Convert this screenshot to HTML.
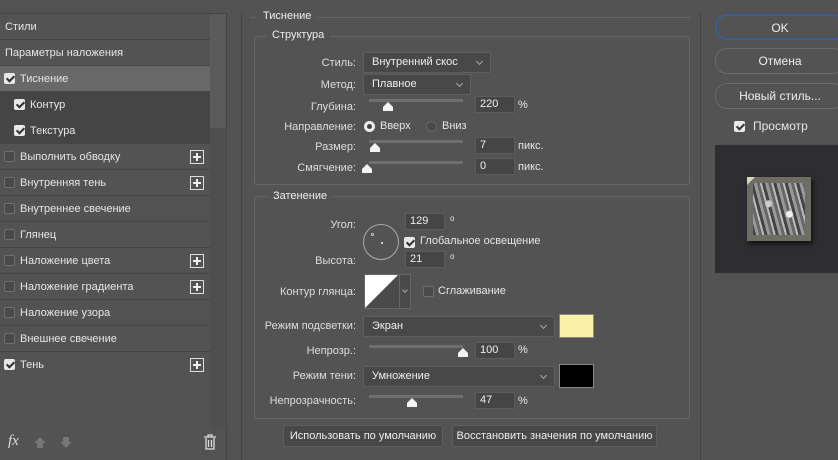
<!DOCTYPE html>
<html><head><meta charset="utf-8"><style>
*{box-sizing:border-box;margin:0;padding:0}
body{width:838px;height:460px;background:#535353;font-family:"Liberation Sans",sans-serif;font-size:11px;color:#e6e6e6;position:relative;overflow:hidden}
.a{position:absolute}
.row{position:absolute;left:0;width:210px;height:26px;line-height:26px;border-bottom:1px solid #444;padding-left:20px;white-space:nowrap}
.cb{position:absolute;width:11px;height:11px;border-radius:2px;border:1px solid #6e6e6e;background:#4a4a4a}
.cb.on{background:#e8e8e8;border-color:#e8e8e8}
.cb.on:after{content:"";position:absolute;left:3px;top:0px;width:3px;height:6px;border:solid #333;border-width:0 2px 2px 0;transform:rotate(45deg)}
.plus{position:absolute;left:190px;top:6px;width:14px;height:14px;border:1px solid #ddd}
.plus:before{content:"";position:absolute;left:2px;top:5px;width:8px;height:2px;background:#eee}
.plus:after{content:"";position:absolute;left:5px;top:2px;width:2px;height:8px;background:#eee}
.lbl{position:absolute;text-align:right;width:200px;color:#ddd}
.sel{position:absolute;height:21px;background:#484848;border:1px solid #5f5f5f;border-radius:2px;padding-left:8px;line-height:19px;color:#eee}
.sel:after{content:"";position:absolute;right:8px;top:6px;width:4px;height:4px;border:solid #aaa;border-width:0 1px 1px 0;transform:rotate(45deg)}
.inp{position:absolute;height:17px;width:40px;background:#454545;border:1px solid #5c5c5c;padding-left:4px;line-height:15px;color:#eee}
.tr{position:absolute;height:3px;width:94px;background:#6e6e6e}
.th{position:absolute;width:0;height:0;border-left:5px solid transparent;border-right:5px solid transparent;border-bottom:5px solid #f4f4f4}
.th:after{content:"";position:absolute;left:-5px;top:5px;width:10px;height:4px;background:#f4f4f4}
.box{position:absolute;border:1px solid #666;border-radius:2px}
.leg{position:absolute;background:#535353;padding:0 6px;color:#eee}
.btn{position:absolute;border:1px solid #6a6a6a;border-radius:12px;text-align:center;color:#eee;font-size:12px}
.fb{position:absolute;height:22px;background:#484848;border:1px solid #5f5f5f;border-radius:2px;text-align:center;line-height:20px;color:#eee}
</style></head><body>
<div class="a" style="left:0;top:13px;width:227px;height:447px;border-right:1px solid #444;border-top:1px solid #444"></div>
<div class="a" style="left:210px;top:14px;width:16px;height:114px;background:#5b5b5b"></div>
<div class="a" style="left:210px;top:128px;width:16px;height:300px;background:#4f4f4f"></div>
<div class="row" style="top:14px;padding-left:5px">Стили</div>
<div class="row" style="top:40px;padding-left:5px">Параметры наложения</div>
<div class="row" style="top:66px;background:#696969"><div class="cb on" style="left:4px;top:7px"></div>Тиснение</div>
<div class="row" style="top:92px;background:#454545;padding-left:30px;border:0"><div class="cb on" style="left:14px;top:7px"></div>Контур</div>
<div class="row" style="top:118px;background:#454545;padding-left:30px"><div class="cb on" style="left:14px;top:7px"></div>Текстура</div>
<div class="row" style="top:144px"><div class="cb" style="left:4px;top:7px"></div>Выполнить обводку<div class="plus"></div></div>
<div class="row" style="top:170px"><div class="cb" style="left:4px;top:7px"></div>Внутренняя тень<div class="plus"></div></div>
<div class="row" style="top:196px"><div class="cb" style="left:4px;top:7px"></div>Внутреннее свечение</div>
<div class="row" style="top:222px"><div class="cb" style="left:4px;top:7px"></div>Глянец</div>
<div class="row" style="top:248px"><div class="cb" style="left:4px;top:7px"></div>Наложение цвета<div class="plus"></div></div>
<div class="row" style="top:274px"><div class="cb" style="left:4px;top:7px"></div>Наложение градиента<div class="plus"></div></div>
<div class="row" style="top:300px"><div class="cb" style="left:4px;top:7px"></div>Наложение узора</div>
<div class="row" style="top:326px"><div class="cb" style="left:4px;top:7px"></div>Внешнее свечение</div>
<div class="row" style="top:352px;border:0"><div class="cb on" style="left:4px;top:7px"></div>Тень<div class="plus"></div></div>
<div class="a" style="left:8px;top:433px;font-style:italic;font-family:'Liberation Serif',serif;font-size:15px;color:#ddd">fx</div>
<div class="a" style="left:34px;top:437px;width:0;height:0;border-left:6px solid transparent;border-right:6px solid transparent;border-bottom:6px solid #777"></div>
<div class="a" style="left:37px;top:443px;width:6px;height:5px;background:#777"></div>
<div class="a" style="left:63px;top:437px;width:6px;height:5px;background:#777"></div>
<div class="a" style="left:60px;top:442px;width:0;height:0;border-left:6px solid transparent;border-right:6px solid transparent;border-top:6px solid #777"></div>
<svg class="a" style="left:203px;top:434px" width="14" height="16"><path d="M1 3H13M5 3V1H9V3M3 4V15H11V4M5.5 6V13M8.5 6V13" stroke="#ddd" stroke-width="1.3" fill="none"/></svg>
<div class="a" style="left:241px;top:13px;width:460px;height:447px;border-left:1px solid #444;border-right:1px solid #444"></div>
<div class="a" style="left:250px;top:17px;width:440px;height:1px;background:#666"></div>
<div class="leg" style="left:257px;top:10px">Тиснение</div>
<div class="box" style="left:254px;top:36px;width:436px;height:149px"></div>
<div class="leg" style="left:266px;top:29px">Структура</div>
<div class="lbl" style="left:156px;top:57px">Стиль:</div>
<div class="sel" style="left:363px;top:52px;width:128px">Внутренний скос</div>
<div class="lbl" style="left:156px;top:79px">Метод:</div>
<div class="sel" style="left:363px;top:74px;width:108px">Плавное</div>
<div class="lbl" style="left:156px;top:101px">Глубина:</div>
<div class="tr" style="left:369px;top:99px"></div><div class="th" style="left:383px;top:102px"></div>
<div class="inp" style="left:475px;top:96px">220</div><div class="a" style="left:518px;top:99px">%</div>
<div class="lbl" style="left:156px;top:121px">Направление:</div>
<div class="a" style="left:364px;top:121px;width:11px;height:11px;border-radius:50%;background:#eee"><div class="a" style="left:3px;top:3px;width:5px;height:5px;border-radius:50%;background:#444"></div></div>
<div class="a" style="left:380px;top:120px">Вверх</div>
<div class="a" style="left:426px;top:121px;width:11px;height:11px;border-radius:50%;border:1px solid #666;background:#4a4a4a"></div>
<div class="a" style="left:442px;top:120px">Вниз</div>
<div class="lbl" style="left:156px;top:141px">Размер:</div>
<div class="tr" style="left:369px;top:140px"></div><div class="th" style="left:370px;top:143px"></div>
<div class="inp" style="left:475px;top:137px">7</div><div class="a" style="left:518px;top:140px">пикс.</div>
<div class="lbl" style="left:156px;top:162px">Смягчение:</div>
<div class="tr" style="left:369px;top:161px"></div><div class="th" style="left:362px;top:164px"></div>
<div class="inp" style="left:475px;top:158px">0</div><div class="a" style="left:518px;top:161px">пикс.</div>
<div class="box" style="left:254px;top:196px;width:436px;height:223px"></div>
<div class="leg" style="left:267px;top:190px">Затенение</div>
<div class="lbl" style="left:156px;top:219px">Угол:</div>
<div class="a" style="left:363px;top:224px;width:36px;height:36px;border-radius:50%;border:1px solid #aaa"><div class="a" style="left:17px;top:17px;width:2px;height:2px;background:#ccc"></div><div class="a" style="left:7px;top:8px;width:3px;height:3px;border-radius:50%;border:1px solid #ccc"></div></div>
<div class="inp" style="left:405px;top:213px">129</div><div class="a" style="left:450px;top:214px;font-size:8px">o</div>
<div class="cb on" style="left:404px;top:237px"></div><div class="a" style="left:420px;top:235px">Глобальное освещение</div>
<div class="lbl" style="left:156px;top:255px">Высота:</div>
<div class="inp" style="left:405px;top:251px">21</div><div class="a" style="left:450px;top:252px;font-size:8px">o</div>
<div class="lbl" style="left:156px;top:286px">Контур глянца:</div>
<div class="a" style="left:364px;top:274px;width:47px;height:35px;border:1px solid #666;background:#4a4a4a">
<svg width="34" height="33" style="position:absolute;left:0;top:0"><polygon points="0,0 33,0 0,33" fill="#fff"/></svg>
<div class="a" style="left:34px;top:0;width:1px;height:33px;background:#666"></div>
<div class="a" style="left:38px;top:13px;width:4px;height:4px;border:solid #aaa;border-width:0 1px 1px 0;transform:rotate(45deg)"></div></div>
<div class="cb" style="left:423px;top:286px"></div><div class="a" style="left:438px;top:285px">Сглаживание</div>
<div class="lbl" style="left:156px;top:320px">Режим подсветки:</div>
<div class="sel" style="left:363px;top:316px;width:192px">Экран</div>
<div class="a" style="left:559px;top:314px;width:35px;height:24px;background:#fbf2a8;border:1px solid #888"></div>
<div class="lbl" style="left:156px;top:345px">Непрозр.:</div>
<div class="tr" style="left:369px;top:345px"></div><div class="th" style="left:458px;top:348px"></div>
<div class="inp" style="left:475px;top:342px">100</div><div class="a" style="left:518px;top:344px">%</div>
<div class="lbl" style="left:156px;top:370px">Режим тени:</div>
<div class="sel" style="left:363px;top:366px;width:192px">Умножение</div>
<div class="a" style="left:559px;top:364px;width:35px;height:24px;background:#000;border:1px solid #888"></div>
<div class="lbl" style="left:156px;top:395px">Непрозрачность:</div>
<div class="tr" style="left:369px;top:395px"></div><div class="th" style="left:407px;top:398px"></div>
<div class="inp" style="left:475px;top:392px">47</div><div class="a" style="left:518px;top:395px">%</div>
<div class="fb" style="left:283px;top:425px;width:160px">Использовать по умолчанию</div>
<div class="fb" style="left:452px;top:425px;width:205px">Восстановить значения по умолчанию</div>
<div class="btn" style="left:715px;top:14px;width:130px;height:26px;line-height:24px;border:2px solid #3a5f95">OK</div>
<div class="btn" style="left:715px;top:48px;width:130px;height:26px;line-height:24px">Отмена</div>
<div class="btn" style="left:715px;top:83px;width:130px;height:26px;line-height:24px">Новый стиль...</div>
<div class="cb on" style="left:734px;top:121px"></div><div class="a" style="left:753px;top:119px;font-size:12px">Просмотр</div>
<div class="a" style="left:715px;top:145px;width:123px;height:128px;background:#2e2d2f"></div>
<div class="a" style="left:747px;top:177px;width:64px;height:64px;background:#6e6d63;box-shadow:2px 3px 4px #111">
<div class="a" style="left:0;top:0;width:0;height:0;border-top:8px solid #d8d8b8;border-right:8px solid transparent"></div>
<div class="a" style="left:6px;top:6px;width:52px;height:52px;background:radial-gradient(circle at 30% 40%,#ccc 0 3px,transparent 4px),radial-gradient(circle at 70% 60%,#eee 0 3px,transparent 4px),repeating-linear-gradient(75deg,#444 0 3px,#999 3px 6px,#666 6px 9px,#bbb 9px 11px)"></div>
</div>
</body></html>
